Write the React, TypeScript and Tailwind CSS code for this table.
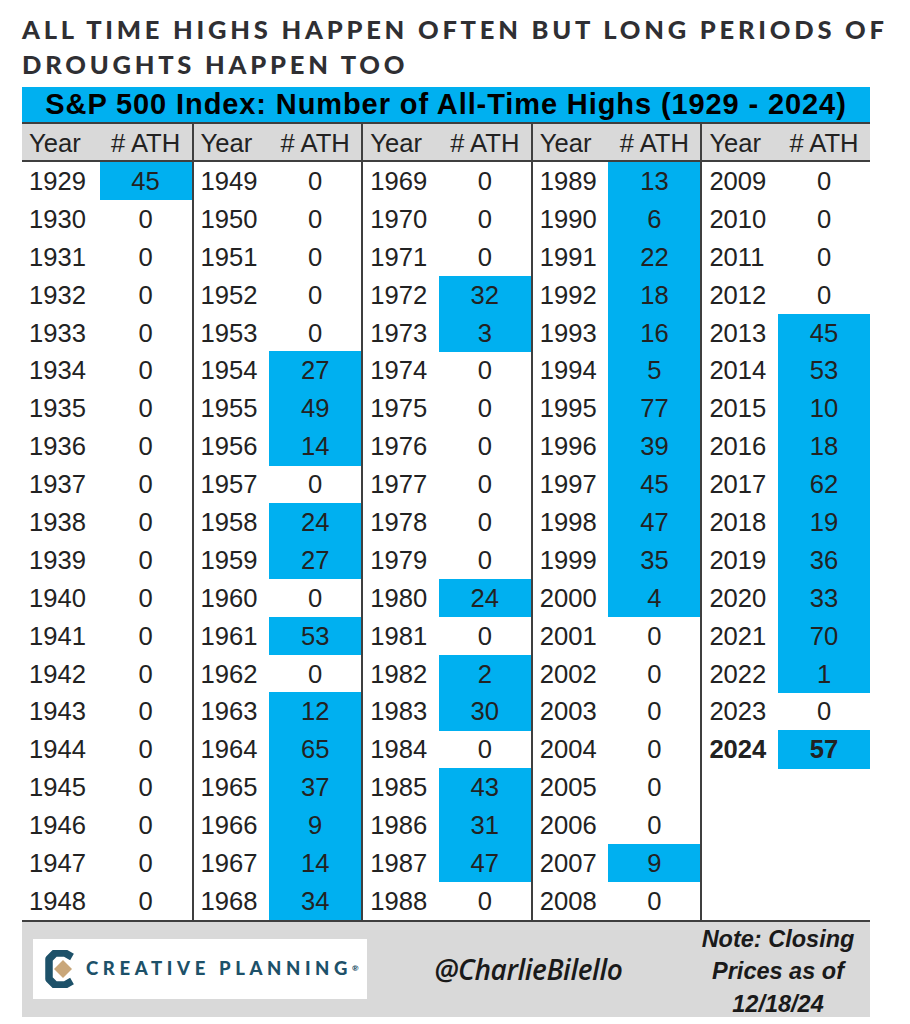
import React from 'react';

type Row = [number, number | null];

const columns: Row[][] = [
  [
    [1929, 45], [1930, 0], [1931, 0], [1932, 0], [1933, 0], [1934, 0], [1935, 0],
    [1936, 0], [1937, 0], [1938, 0], [1939, 0], [1940, 0], [1941, 0], [1942, 0],
    [1943, 0], [1944, 0], [1945, 0], [1946, 0], [1947, 0], [1948, 0],
  ],
  [
    [1949, 0], [1950, 0], [1951, 0], [1952, 0], [1953, 0], [1954, 27], [1955, 49],
    [1956, 14], [1957, 0], [1958, 24], [1959, 27], [1960, 0], [1961, 53], [1962, 0],
    [1963, 12], [1964, 65], [1965, 37], [1966, 9], [1967, 14], [1968, 34],
  ],
  [
    [1969, 0], [1970, 0], [1971, 0], [1972, 32], [1973, 3], [1974, 0], [1975, 0],
    [1976, 0], [1977, 0], [1978, 0], [1979, 0], [1980, 24], [1981, 0], [1982, 2],
    [1983, 30], [1984, 0], [1985, 43], [1986, 31], [1987, 47], [1988, 0],
  ],
  [
    [1989, 13], [1990, 6], [1991, 22], [1992, 18], [1993, 16], [1994, 5], [1995, 77],
    [1996, 39], [1997, 45], [1998, 47], [1999, 35], [2000, 4], [2001, 0], [2002, 0],
    [2003, 0], [2004, 0], [2005, 0], [2006, 0], [2007, 9], [2008, 0],
  ],
  [
    [2009, 0], [2010, 0], [2011, 0], [2012, 0], [2013, 45], [2014, 53], [2015, 10],
    [2016, 18], [2017, 62], [2018, 19], [2019, 36], [2020, 33], [2021, 70], [2022, 1],
    [2023, 0], [2024, 57],
  ],
];

const LogoMark = () => (
  <svg width="30" height="38" viewBox="0 0 30 38">
    <path
      d="M27 7 L20 3 L10 3 L4 9 L4 29 L10 35 L20 35 L27 31"
      fill="none"
      stroke="#1d5169"
      strokeWidth="7.5"
      strokeLinejoin="round"
    />
    <path d="M18 10 L27 19 L18 28 L9 19 Z" fill="#c9a77a" />
  </svg>
);

const Column = ({ rows, first }: { rows: Row[]; first: boolean }) => {
  const padded: Row[] = [...rows];
  while (padded.length < 20) padded.push([0, null]);

  return (
    <div className={first ? 'flex flex-col' : 'flex flex-col border-l-2 border-[#3f3f3f]'}>
      <div className="grid h-[36px] grid-cols-[1fr_92px] items-center bg-[#d9d9d9]">
        <span className="pl-[7px]">Year</span>
        <span className="text-center"># ATH</span>
      </div>
      <div className="h-[2px] bg-[#3f3f3f]" />
      {padded.map(([year, ath], i) => {
        if (ath === null) return <div key={`e${i}`} className="h-[37.9px]" />;
        const bold = year === 2024;
        return (
          <div key={year} className={`grid h-[37.9px] grid-cols-[1fr_92px] ${bold ? 'font-bold' : ''}`}>
            <span className="flex items-center pl-[7px]">{year}</span>
            <span className={`flex items-center justify-center ${ath > 0 ? 'bg-[#00b0f0]' : ''}`}>{ath}</span>
          </div>
        );
      })}
    </div>
  );
};

export default function App() {
  return (
    <div className="h-[1024px] w-[910px] bg-white pt-[12px]">
      <h1 className="px-[22px] font-['Lato',sans-serif] text-[25.5px] font-black uppercase leading-[35px] tracking-[0.148em] text-[#2f2f33]">
        <div className="whitespace-nowrap">All Time Highs Happen Often But Long Periods Of</div>
        <div className="whitespace-nowrap">Droughts Happen Too</div>
      </h1>

      <div className="ml-[22px] mt-[5px] w-[848px] font-['Liberation_Sans',Arial,sans-serif] text-[25.6px] text-[#222]">
        <div className="flex h-[35px] items-center justify-center bg-[#00b0f0] text-[29px] font-bold tracking-[0.9px] text-black">
          S&amp;P 500 Index: Number of All-Time Highs (1929 - 2024)
        </div>
        <div className="h-[2px] bg-[#3f3f3f]" />
        <div className="grid grid-cols-5">
          {columns.map((rows, i) => (
            <Column key={i} rows={rows} first={i === 0} />
          ))}
        </div>
        <div className="h-[2px] bg-[#3f3f3f]" />
        <div className="flex h-[95px] items-center bg-[#d9d9d9] pl-[11px] pr-[8px]">
          <div className="flex h-[60px] w-[334px] items-center gap-[11px] bg-white pl-[12px]">
            <LogoMark />
            <span className="whitespace-nowrap font-['Lato',sans-serif] text-[18.5px] font-black tracking-[0.25em] text-[#1d5169]">
              CREATIVE PLANNING<sup className="text-[8px]">®</sup>
            </span>
          </div>
          <div className="flex flex-1 justify-center pr-[4px]">
            <span className="font-['Open_Sans',sans-serif] text-[28px] font-semibold italic tracking-[-0.4px] text-[#1a1a1a]">
              @CharlieBilello
            </span>
          </div>
          <div className="w-[168px] pt-[4px] text-center text-[23.5px] font-bold italic leading-[32.5px] text-[#1a1a1a]">
            Note: Closing
            <br />
            Prices as of
            <br />
            12/18/24
          </div>
        </div>
      </div>
    </div>
  );
}
